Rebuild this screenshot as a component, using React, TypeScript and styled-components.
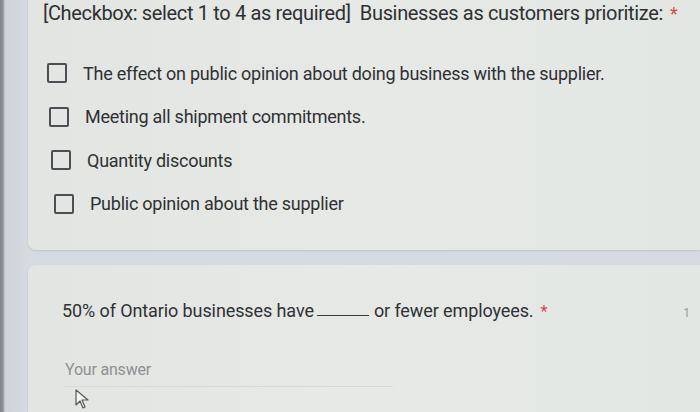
import React from "react";
import styled, { createGlobalStyle } from "styled-components";

const Global = createGlobalStyle`
  html, body { margin: 0; padding: 0; }
  body {
    width: 700px; height: 412px; overflow: hidden;
    background: #d4dae0;
    font-family: Roboto, "Liberation Sans", sans-serif;
  }
`;

const Screen = styled.div`
  display: flex;
  width: 700px;
  height: 412px;
  overflow: hidden;
  background: linear-gradient(90deg, #7f8387 0px, #8e9296 3px, #cdd3d9 5px, #d5dbe1 28px);
`;

const Column = styled.div`
  flex: 1;
  display: flex;
  flex-direction: column;
  gap: 15px;
  padding-left: 28px;
  margin-top: -10px;
`;

const Card = styled.section<{ $h: number }>`
  flex-shrink: 0;
  height: ${(p) => p.$h}px;
  background: linear-gradient(90deg, #e2e5e1 0%, #e6e9e5 50%, #e3e7e4 100%);
  border-radius: 8px 0 0 8px;
  box-shadow: 0 1px 2px rgba(0, 0, 0, 0.12);
  position: relative;
`;

const Title = styled.div`
  padding: 11px 0 0 15px;
  font-size: 20px;
  color: #2e3033;
  letter-spacing: -0.35px;
  white-space: nowrap;
`;

const Star = styled.span`
  color: #d94a44;
  margin-left: 7px;
  font-size: 0.9em;
`;

const Options = styled.div`
  display: flex;
  flex-direction: column;
  gap: 23.5px;
  padding: 38px 0 0 19px;
`;

const Option = styled.label<{ $shift: number }>`
  display: flex;
  align-items: center;
  gap: 16px;
  height: 20px;
  padding-left: ${(p) => p.$shift}px;
  font-size: 18px;
  color: #2f3134;
  letter-spacing: -0.25px;
`;

const Box = styled.span`
  width: 16px;
  height: 16px;
  border: 2.4px solid #4b4e52;
  border-radius: 2px;
  flex-shrink: 0;
`;

const Question = styled.div`
  padding: 35px 0 0 34px;
  font-size: 18px;
  color: #2f3134;
  letter-spacing: -0.1px;
  white-space: nowrap;
`;

const Blank = styled.span`
  display: inline-block;
  width: 52px;
  border-bottom: 1.5px solid #3a3c3f;
  margin: 0 5px 0 3px;
  vertical-align: 1px;
`;

const Counter = styled.span`
  position: absolute;
  right: 10px;
  top: 41px;
  font-size: 12px;
  color: #9a9d9f;
`;

const Answer = styled.div`
  margin: 39px 0 0 37px;
  width: 328px;
  padding-bottom: 7px;
  border-bottom: 1px solid #d7dbd8;
  font-size: 16px;
  color: #8d9194;
  letter-spacing: -0.2px;
`;

const Pointer = styled.svg`
  display: block;
  margin: 2px 0 0 47px;
`;

const options = [
  { t: "The effect on public opinion about doing business with the supplier.", s: 0 },
  { t: "Meeting all shipment commitments.", s: 2 },
  { t: "Quantity discounts", s: 4 },
  { t: "Public opinion about the supplier", s: 7 },
];

export default function App() {
  return (
    <>
      <Global />
      <Screen>
        <Column>
          <Card $h={260}>
            <Title>
              [Checkbox: select 1 to 4 as required]&nbsp; Businesses as customers prioritize:
              <Star>*</Star>
            </Title>
            <Options>
              {options.map((o) => (
                <Option key={o.t} $shift={o.s}>
                  <Box />
                  {o.t}
                </Option>
              ))}
            </Options>
          </Card>
          <Card $h={160}>
            <Question>
              50% of Ontario businesses have<Blank />or fewer employees.
              <Star>*</Star>
            </Question>
            <Counter>1</Counter>
            <Answer>Your answer</Answer>
            <Pointer width="16" height="20" viewBox="0 0 16 20">
              <path d="M1 1 L1 16 L5 12 L8 19 L10 18 L7 11 L13 11 Z" fill="#f4f5f3" stroke="#55595c" strokeWidth="1.2" strokeLinejoin="round" />
            </Pointer>
          </Card>
        </Column>
      </Screen>
    </>
  );
}
